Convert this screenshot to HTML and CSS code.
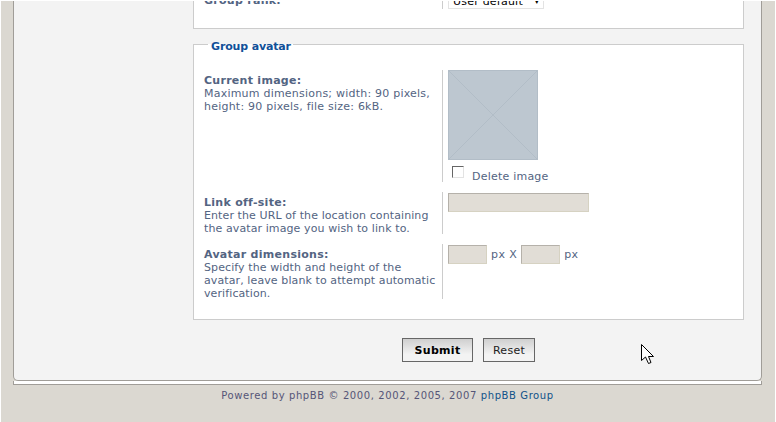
FILE: index.html
```html
<!DOCTYPE html>
<html lang="en">
<head>
<meta charset="utf-8">
<title>Group avatar</title>
<link rel="stylesheet" href="styles.css">
</head>
<body>
<div class="page">
  <main class="panel">
    <form class="form">
      <fieldset class="box box-rank">
        <div class="row rank-row">
          <div class="label"><b>Group rank:</b></div>
          <div class="field"><div class="select">User default<span class="arrow">▾</span></div></div>
        </div>
      </fieldset>
      <fieldset class="box box-avatar">
        <legend class="legend">Group avatar</legend>
        <div class="row row-image">
          <div class="label"><b>Current image:</b><br>Maximum dimensions; width: 90 pixels, height: 90 pixels, file size: 6kB.</div>
          <div class="field">
            <svg class="noimage" width="90" height="90" viewBox="0 0 90 90" aria-hidden="true">
              <rect width="90" height="90" fill="#bdc7d0"/>
              <path d="M0 0L90 90M90 0L0 90" stroke="#b2bdc7" stroke-width="1" fill="none"/>
              <rect x=".5" y=".5" width="89" height="89" fill="none" stroke="#b2bdc7"/>
            </svg>
            <label class="check"><span class="checkbox"></span><span class="check-text">Delete image</span></label>
          </div>
        </div>
        <div class="row row-link">
          <div class="label"><b>Link off-site:</b><br><span class="tight">Enter the URL of the location containing the avatar image you wish to link to.</span></div>
          <div class="field"><span class="input input-wide"></span></div>
        </div>
        <div class="row row-dims">
          <div class="label"><b>Avatar dimensions:</b><br><span class="tight">Specify the width and height of the avatar, leave blank to attempt automatic verification.</span></div>
          <div class="field dims"><span class="input input-small"></span><span class="unit">px X</span><span class="input input-small"></span><span class="unit">px</span></div>
        </div>
      </fieldset>
      <div class="actions">
        <button type="button" class="btn btn-main">Submit</button>
        <button type="button" class="btn btn-reset">Reset</button>
      </div>
    </form>
  </main>
  <div class="panel-foot"></div>
  <footer class="copyright">Powered by phpBB © 2000, 2002, 2005, 2007 <a href="#">phpBB Group</a></footer>
</div>
<svg class="cursor" width="13" height="21" viewBox="0 0 13 21" aria-hidden="true">
  <path d="M.5.5V16.5L4.5 13L7.5 19.5L10 18.5L7.5 12.5H12.5Z" fill="#fff" stroke="#000" stroke-width="1"/>
</svg>
</body>
</html>
```
FILE: styles.css
```css
html, body {
  margin: 0;
  padding: 0;
  background: #fff;
}
body {
  width: 776px;
  height: 422px;
  overflow: hidden;
  position: relative;
  font-family: "DejaVu Sans", Verdana, sans-serif;
  font-size: 11px;
  line-height: 13px;
  letter-spacing: .22px;
  color: #536482;
}
.page {
  box-sizing: border-box;
  margin: 1px 1px 0 1px;
  height: 421px;
  padding: 0 13px 0 12px;
  background: #dbd8d1;
  overflow: hidden;
}
.panel {
  box-sizing: border-box;
  height: 380px;
  background: #f3f3f3;
  border-left: 1px solid #a09d98;
  border-right: 1px solid #a09d98;
  border-bottom: 1px solid #a09d98;
  border-radius: 0 0 5px 5px;
  padding: 0 17px 0 179px;
}
.form {
  display: flex;
  flex-direction: column;
}
.box {
  margin: 0;
  padding: 0;
  min-width: 0;
  background: #fff;
  border: 1px solid #ccc;
}
.box-rank {
  height: 28px;
  border-top: 0;
  box-sizing: border-box;
  padding: 0 10px;
  overflow: hidden;
}
.box-avatar {
  box-sizing: border-box;
  height: 284px;
  margin-top: 7px;
  padding: 17px 10px 0;
}
.legend {
  margin-left: 4px;
  padding: 4px 2px 0 3px;
  font-weight: bold;
  font-size: 11px;
  letter-spacing: -.15px;
  color: #115098;
}
.row {
  display: flex;
}
.label {
  box-sizing: border-box;
  width: 238px;
  padding: 4px 2px 0 0;
}
.label b {
  font-weight: bold;
  letter-spacing: .28px;
}
.tight {
  letter-spacing: .1px;
}
.field {
  border-left: 1px solid #ccc;
  padding-left: 5px;
}
.rank-row {
  margin-top: -7px;
  height: 15px;
}
.rank-row .label {
  padding-top: 0;
}
.select {
  box-sizing: border-box;
  width: 96px;
  height: 15px;
  padding: 0 4px;
  border: 1px solid #e3e3e3;
  display: flex;
  justify-content: space-between;
  color: #000;
}
.arrow {
  font-size: 8px;
}
.row-image {
  height: 112px;
}
.noimage {
  display: block;
}
.check {
  display: flex;
  align-items: flex-start;
  margin: 6px 0 0 4px;
  line-height: 13px;
}
.check-text {
  padding-top: 4px;
}
.checkbox {
  box-sizing: border-box;
  width: 12px;
  height: 12px;
  margin-right: 8px;
  background: #fff;
  border: 1px solid #e3e3e3;
  border-top-color: #666;
  border-left-color: #666;
}
.row-link {
  height: 42px;
  margin-top: 10px;
}
.row-dims {
  height: 55px;
  margin-top: 10px;
}
.row-link .field, .row-dims .field {
  padding-top: 1px;
}
.dims {
  display: flex;
  align-items: flex-start;
  gap: 4px;
  flex: 1;
}
.unit {
  line-height: 19px;
  letter-spacing: .4px;
}
.input {
  display: block;
  box-sizing: border-box;
  height: 19px;
  background: #e1ddd6;
  border: 1px solid #d6d2c2;
  border-top-color: #b5b1aa;
  border-left-color: #b5b1aa;
}
.input-wide {
  width: 141px;
}
.input-small {
  width: 39px;
}
.actions {
  display: flex;
  justify-content: center;
  gap: 10px;
  margin-top: 18px;
}
.btn {
  box-sizing: border-box;
  height: 24px;
  padding: 0;
  font-family: inherit;
  font-size: 11px;
  letter-spacing: .3px;
  color: #222;
  background: linear-gradient(#cfcfcf, #f3f3f3 70%);
  border: 1px solid #666;
}
.btn-main {
  width: 71px;
  font-weight: bold;
  color: #000;
}
.btn-reset {
  width: 52px;
}
.panel-foot {
  height: 3px;
  background: #fff;
  border: 1px solid #a09d98;
  border-top: 0;
}
.copyright {
  margin-top: 4px;
  text-align: center;
  font-size: 10px;
  letter-spacing: .6px;
  color: #555577;
}
.copyright a {
  color: #105289;
  text-decoration: none;
}
.cursor {
  position: absolute;
  left: 641px;
  top: 344px;
}
```
